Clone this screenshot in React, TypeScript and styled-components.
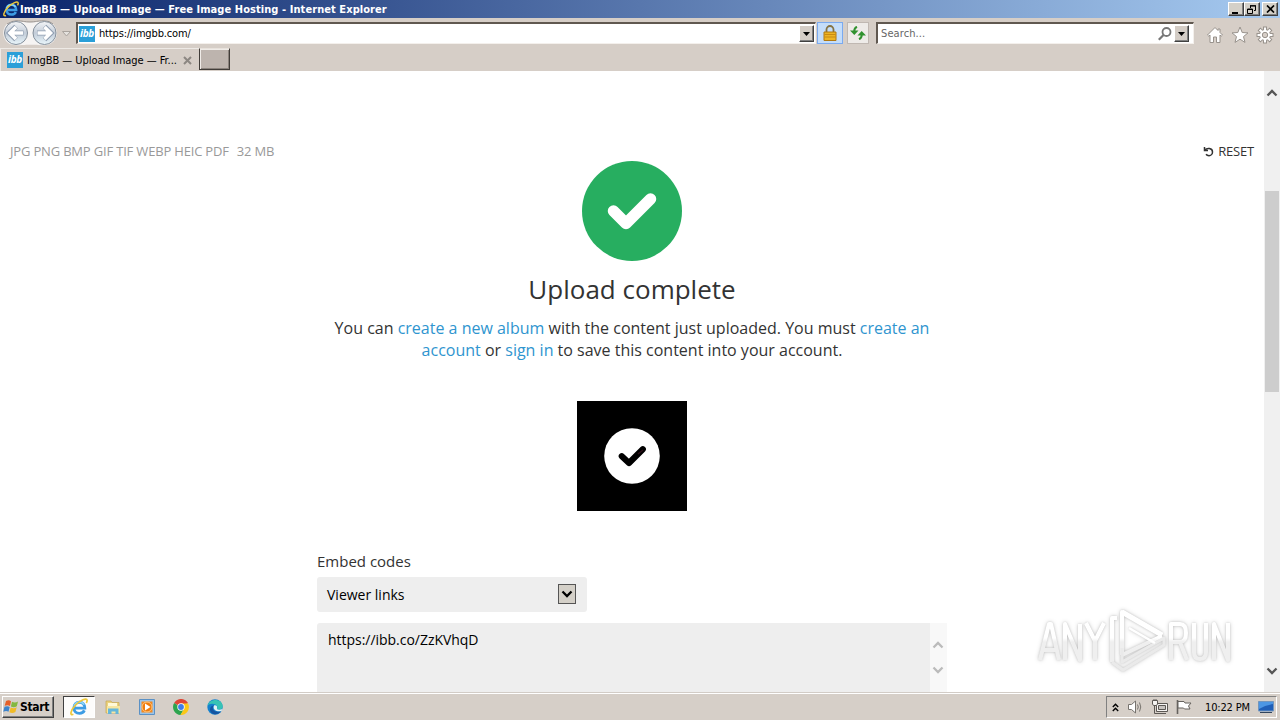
import React from 'react';
import styled, { createGlobalStyle } from 'styled-components';

const Global = createGlobalStyle`
  * { box-sizing: border-box; }
  body { margin: 0; width: 1280px; height: 720px; overflow: hidden; background: #fff; }
  svg { display: block; flex: none; }
`;
const ui = `font-family: "DejaVu Sans Condensed", "DejaVu Sans", sans-serif; font-stretch: condensed; font-size: 11px; white-space: nowrap;`;
const raised = `border: 1px solid; border-color: #fff #404040 #404040 #fff; box-shadow: inset -1px -1px #808080;`;

const Desktop = styled.div`width: 1280px; height: 720px; display: flex; flex-direction: column; overflow: hidden;`;
const TitleBar = styled.header`
  height: 18px; flex: none; display: flex; align-items: center; padding: 0 2px 0 3px;
  background: linear-gradient(90deg, #0a246a, #a6caf0);
`;
const Title = styled.div`
  ${ui} flex: 1; color: #fff; font-weight: 700; line-height: 18px; margin-left: 1px; padding-top: 1px; letter-spacing: 0.07px;
`;
const WinButton = styled.div<{ $gap?: boolean }>`
  width: 16px; height: 14px; background: #d4d0c8; ${raised} margin-left: ${p => (p.$gap ? 2 : 0)}px;
  display: flex; align-items: center; justify-content: center;
`;
const Toolbar = styled.div`height: 30px; flex: none; display: flex; align-items: flex-start; background: #d6cec7; padding: 2px 0 0 2px;`;
const AddressBar = styled.div`
  width: 740px; height: 22px; margin: 2px 0 0 4px; background: #fff; display: flex; align-items: center;
  border: 1px solid; border-color: #605850 #f4f0ec #f4f0ec #605850; border-top-width: 2px; border-left-width: 2px; padding-left: 1px;
`;
const SearchBar = styled(AddressBar)`width: 318px; margin-left: 7px; padding-left: 3px; padding-right: 4px;`;
const FieldText = styled.div<{ $muted?: boolean; $ls?: number }>`
  ${ui} flex: 1; color: ${p => (p.$muted ? '#666' : '#000')}; line-height: 18px; padding-top: 1px; margin-left: ${p => (p.$muted ? 0 : 4)}px;
  letter-spacing: ${p => p.$ls ?? 0}px;
`;
const Favicon = styled.div`
  width: 16px; height: 16px; flex: none; background: #2a9fd8; color: #fff; text-align: center;
  font: italic 700 10px/15px "Open Sans", sans-serif; letter-spacing: -0.3px;
`;
const DropButton = styled.div`
  width: 15px; height: 17px; background: #d4cdc6; ${raised} display: flex; align-items: center; justify-content: center;
  margin-left: 2px;
`;
const ToolButton = styled.div<{ $active?: boolean }>`
  width: ${p => (p.$active ? 26 : 22)}px; height: 22px; margin: 2px 0 0 ${p => (p.$active ? 1 : 4)}px;
  display: flex; align-items: center; justify-content: center;
  background: ${p => (p.$active ? '#c4ddfa' : '#eeebe8')}; border: 1px solid ${p => (p.$active ? '#7aaaf0' : '#c0b8b2')};
`;
const AddressEnd = styled.div`display: flex; width: 18px; padding-right: 1px;`;
const Commands = styled.div`display: flex; gap: 7px; padding: 6px 0 0 12px;`;
const TabStrip = styled.div`height: 23px; flex: none; display: flex; background: #d6cec7;`;
const Tab = styled.div`
  width: 199px; height: 23px; display: flex; align-items: center; padding-left: 6px; border-left: 1px solid #eeeae6; border-top: 1px solid #eeeae6;
`;
const TabText = styled(FieldText)`flex: none; width: 156px; margin-left: 4px;`;
const NewTab = styled.div`
  width: 31px; height: 22px; background: #bdb4ae; border: 1px solid #403c38; border-top-color: #e8e2dc; border-left-color: #403c38;
  box-shadow: inset 1px 1px #f0ece8, inset -1px -1px #8a827c;
`;
const Page = styled.main`flex: 1; min-height: 0; display: flex; background: #fff; overflow: hidden; font-family: "Open Sans", sans-serif;`;
const Content = styled.div`width: 1264px; display: flex; flex-direction: column; align-items: center; padding-top: 71px;`;
const InfoRow = styled.div`
  align-self: stretch; height: 19px; flex: none; display: flex; justify-content: space-between; padding: 0 10px 0 10px;
  font-size: 13px; line-height: 19px; color: #999; letter-spacing: -0.18px;
`;
const Formats = styled.div`display: flex; gap: 8px;`;
const Reset = styled.div`display: flex; align-items: center; gap: 4px; color: #333;`;
const BigMark = styled.div`width: 100px; height: 100px; flex: none;`;
const Heading = styled.h1`margin: 10px 0 0; font-size: 26px; line-height: 36px; font-weight: 400; color: #333; flex: none;`;
const Message = styled.p`
  margin: 10px 0 0; flex: none; font-size: 16px; line-height: 22px; color: #333; text-align: center; white-space: nowrap;
`;
const Link = styled.a`color: #2f95cf;`;
const Thumb = styled.div`width: 110px; height: 110px; margin-top: 40px; flex: none; background: #000;`;
const Embed = styled.section`width: 630px; margin-top: 39px; flex: none;`;
const Label = styled.div`font-size: 15px; line-height: 22px; color: #333;`;
const Select = styled.div`
  width: 270px; height: 35px; margin-top: 5px; border-radius: 3px; background: #eee; display: flex; align-items: center; justify-content: space-between;
  padding: 0 11px 0 10px; font-size: 14px; color: #000;
`;
const SelectArrow = styled.div`width: 18px; height: 20px; margin-bottom: 1px; background: #d4d0c8; border: 1px solid #555; display: flex; align-items: center; justify-content: center;`;
const CodeBox = styled.div`
  height: 90px; margin-top: 11px; background: #eee; border-radius: 3px; display: flex; justify-content: space-between;
  padding-left: 11px; font-size: 14px; line-height: 20px; color: #000;
`;
const CodeText = styled.div`padding-top: 7px; letter-spacing: -0.03px;`;
const InnerScroll = styled.div`width: 17px; background: #f8f8f8; display: flex; flex-direction: column; align-items: flex-start; padding: 18px 0 0 2px; gap: 17px;`;
const Scroll = styled.aside`width: 16px; background: #f0f0f0; display: flex; flex-direction: column; align-items: center; padding: 18px 0 17px;`;
const ScrollThumb = styled.div`width: 14px; height: 201px; margin: 94px 0 auto; background: #cdcdcd; flex: none;`;
const Taskbar = styled.footer`
  height: 28px; flex: none; background: #d6cfc8; border-top: 1px solid #d2ccc6; box-shadow: inset 0 1px #fff;
  display: flex; align-items: center; padding: 1px 3px 0 2px;
`;
const Start = styled.div`
  ${ui} width: 52px; height: 22px; ${raised} display: flex; align-items: center; font-weight: 700; font-size: 12px; padding-left: 0; letter-spacing: -0.3px;
`;
const ActiveTask = styled.div`
  width: 32px; height: 22px; margin-left: 9px; border: 1px solid; border-color: #404040 #fff #fff #404040; background: #fdfcfb;
  display: flex; align-items: center; justify-content: center;
`;
const Pinned = styled.div`display: flex; gap: 18px; margin-left: 10px; flex: 1;`;
const Tray = styled.div`
  width: 171px; height: 22px; border: 1px solid; border-color: #808080 #fff #fff #808080; display: flex; align-items: center; padding-left: 5px;
`;
const TrayIcons = styled.div`display: flex; gap: 8px; margin-left: 9px;`;
const Clock = styled.div`${ui} width: 46px; margin: 0 7px 0 13px; letter-spacing: -0.15px;`;
const Watermark = styled.div`
  position: absolute; left: 1030px; top: 600px;
  filter: drop-shadow(0 0 1px rgba(0, 0, 0, 0.13)) drop-shadow(0 0 2px rgba(0, 0, 0, 0.18));
`;

const Explorer = ({ s = 16 }: { s?: number }) => (
  <svg width={s} height={s} viewBox="0 0 16 16" fill="none">
    <path d="M3.3 9H13.2C13.2 5.6 11.2 3.8 8.4 3.8 5.5 3.8 3.5 5.8 3.5 8.8c0 3 2.1 4.8 4.9 4.8 2.1 0 3.7-1 4.4-2.6" stroke="#3d9ce4" strokeWidth="2.5" />
    <path d="M3.6 7.4C4.3 5 6.1 3.7 8.4 3.7c2 0 3.4.8 4.2 2.2" stroke="#8ad4f8" strokeWidth="1.6" />
    <path d="M3 14.5C-.5 16 .3 11 5 6.2 9.200 2 14.800-.5 15.200 2c.1.8-.2 1.600-.7 2.400" stroke="#edc739" strokeWidth="1.500" />
  </svg>
);
const Down = () => <svg width="7" height="4"><path d="M0 0h7L3.500 4z" fill="#000" /></svg>;
const Chevron = ({ up, c = '#555' }: { up?: boolean; c?: string }) => (
  <svg width="12" height="8" viewBox="0 0 12 8"><path d={up ? 'M1.500 6.500 6 2l4.500 4.500' : 'M1.500 1.500 6 6l4.500-4.500'} fill="none" stroke={c} strokeWidth="2.300" /></svg>
);

const NavButtons = () => (
  <svg width="70" height="28" viewBox="-1 0 70 28">
    <defs><linearGradient id="nav" x2="0" y2="1"><stop stopColor="#f4f5f7" /><stop offset=".5" stopColor="#c2ccd8" /><stop offset="1" stopColor="#e9f6fb" /></linearGradient></defs>
    <path d="M13 .8C20 .8 21 2 27 2S34 .8 41 .8c17 0 17 24.500 0 24.500-6 0-8-.5-14-.5s-8 .5-14 .5C-4 25.300-4 .8 13 .8z" fill="#f6f4f3" />
    <path d="M4 4Q9 .8 13 .8C20 .8 21 2 27 2S34 .8 41 .8Q47 .8 50 4" fill="none" stroke="#98928e" />
    <g fill="url(#nav)" stroke="#85909c"><circle cx="13" cy="13" r="11.500" /><circle cx="41.500" cy="13" r="11.500" /></g>
    <g fill="none" stroke="#8f9db0" strokeWidth="5"><path d="M20.500 13H7M13 6.500 6.500 13l6.500 6.500M34 13h13.500M41.500 6.500 48 13l-6.500 6.500" /></g>
    <g fill="none" stroke="#fff" strokeWidth="3.600"><path d="M20 13H7M13 7 7 13l6 6M34.500 13h13M41.500 7l6 6-6 6" /></g>
    <path d="M59.500 11.500h8l-4 4.500z" fill="#e5e2de" stroke="#aaa49e" />
  </svg>
);

const teeth = Array.from({ length: 8 }, (_, i) => i * 45);

export default function App() {
  return (
    <Desktop>
      <Global />
      <TitleBar>
        <Explorer />
        <Title>ImgBB — Upload Image — Free Image Hosting - Internet Explorer</Title>
        <WinButton><svg width="10" height="9"><path d="M1 7h6v2H1z" /></svg></WinButton>
        <WinButton><svg width="10" height="9" fill="none" stroke="#000"><path d="M3 1h5.500v4.500H7M3.500 3V1M3 .7h6M.5 4h5v4.500h-5zM.5 4.500h5" /></svg></WinButton>
        <WinButton $gap><svg width="9" height="8" stroke="#000" strokeWidth="1.700"><path d="M1 .5l7 7M8 .5l-7 7" /></svg></WinButton>
      </TitleBar>
      <Toolbar>
        <NavButtons />
        <AddressBar>
          <Favicon>ibb</Favicon>
          <FieldText $ls={-0.15}>https://imgbb.com/</FieldText>
          <AddressEnd><DropButton><Down /></DropButton></AddressEnd>
        </AddressBar>
        <ToolButton $active>
          <svg width="14" height="16" viewBox="0 0 14 16"><path d="M3.500 8V4.500a3.500 3.500 0 017 0V8" fill="none" stroke="#857344" strokeWidth="1.800" /><path d="M1 7h12v8.500H1z" fill="#edb424" stroke="#b07810" /><path d="M1.500 9.500h11M1.500 12h11" stroke="#c88a12" /></svg>
        </ToolButton>
        <ToolButton>
          <svg width="16" height="14" viewBox="0 0 16 14" fill="none" stroke="#30922f" strokeWidth="2"><path d="M7 .8Q4.300 2 4.300 5M9 13.200Q11.700 12 11.700 9" /><path d="M0 4.500h8.500L4.300 9zM7.500 9.500H16L11.700 5z" fill="#30922f" stroke="none" /></svg>
        </ToolButton>
        <SearchBar>
          <FieldText $muted $ls={0.1}>Search...</FieldText>
          <svg width="14" height="14" viewBox="0 0 14 14" fill="none" stroke="#777" strokeWidth="1.800"><circle cx="8.500" cy="5" r="4" /><path d="M5.500 8 .8 12.800" strokeWidth="2.200" /></svg>
          <DropButton><Down /></DropButton>
        </SearchBar>
        <Commands>
          <svg width="18" height="18" viewBox="0 0 18 18" fill="#fff" stroke="#98928c"><path d="M9 1.500 1.500 9l1.300 1.200L4 9v7.500h3.500V11h3v5.500H14V9l1.200 1.200L16.500 9 14 6.500V3h-2v1.500z" /></svg>
          <svg width="18" height="18" viewBox="0 0 18 18" fill="#fff" stroke="#98928c"><path d="M9 1l2.200 5.500 5.800.4-4.500 3.700 1.500 5.800-5-3.200-5 3.200 1.500-5.800L1 6.900l5.800-.4z" /></svg>
          <svg width="18" height="18" viewBox="0 0 18 18"><g fill="#fff" stroke="#98928c">{teeth.map(a => <rect key={a} x="7.500" y="1" width="3" height="4" transform={`rotate(${a} 9 9)`} />)}<circle cx="9" cy="9" r="5.500" /></g><g fill="#fff">{teeth.map(a => <rect key={a} x="8" y="2" width="2" height="4" transform={`rotate(${a} 9 9)`} />)}</g><circle cx="9" cy="9" r="2.700" fill="#d6cec7" stroke="#98928c" /></svg>
        </Commands>
      </Toolbar>
      <TabStrip>
        <Tab>
          <Favicon>ibb</Favicon>
          <TabText $ls={-0.04}>ImgBB — Upload Image — Fr...</TabText>
          <svg width="9" height="9" stroke="#8c8782" strokeWidth="2"><path d="M1 1l7 7M8 1 1 8" /></svg>
        </Tab>
        <NewTab />
      </TabStrip>
      <Page>
        <Content>
          <InfoRow>
            <Formats><span>JPG PNG BMP GIF TIF WEBP HEIC PDF</span><span>32 MB</span></Formats>
            <Reset>
              <svg width="11" height="11" viewBox="0 0 11 11" fill="none" stroke="#333" strokeWidth="1.500"><path d="M1.500 1v3.500H5M1.800 4.200C4 1.500 9.500 2 9.500 6c0 2-1.500 3.700-3.500 3.700-1.300 0-2.300-.5-3-1.400" /></svg>
              <span>RESET</span>
            </Reset>
          </InfoRow>
          <BigMark>
            <svg width="100" height="100"><circle cx="50" cy="50" r="50" fill="#27ae60" /><path d="M31.500 50 44 62.500 68.500 38" fill="none" stroke="#fff" strokeWidth="11.500" strokeLinecap="round" strokeLinejoin="round" /></svg>
          </BigMark>
          <Heading>Upload complete</Heading>
          <Message>
            You can <Link>create a new album</Link> with the content just uploaded. You must <Link>create an<br />account</Link> or <Link>sign in</Link> to save this content into your account.
          </Message>
          <Thumb>
            <svg width="110" height="110"><circle cx="55" cy="55" r="27.800" fill="#fff" /><path d="M44.800 55.200 52 62l13.800-13.800" fill="none" stroke="#000" strokeWidth="6.200" strokeLinecap="round" strokeLinejoin="round" /><path d="M61 53l5-4" stroke="#30101a" strokeWidth="1.500" /></svg>
          </Thumb>
          <Embed>
            <Label>Embed codes</Label>
            <Select><span>Viewer links</span><SelectArrow><Chevron c="#000" /></SelectArrow></Select>
            <CodeBox><CodeText>https://ibb.co/ZzKVhqD</CodeText><InnerScroll><Chevron up c="#bbb" /><Chevron c="#bbb" /></InnerScroll></CodeBox>
          </Embed>
        </Content>
        <Scroll><Chevron up /><ScrollThumb /><Chevron /></Scroll>
      </Page>
      <Taskbar>
        <Start>
          <svg width="17" height="16" viewBox="0 0 17 16"><path d="M3 2q3-1.500 5 .3L7 7Q5 5.500 1.700 6.800z" fill="#e5602a" /><path d="M9 2.800q3 1.500 6-.3L13.800 7.200Q11 9 7.900 7.500z" fill="#83b840" /><path d="M1.500 7.800q3-1.300 5.200.2l-1.200 4.800Q3.500 11.500.3 12.700z" fill="#3c83cc" /><path d="M7.700 8.500q3 1.500 6-.2l-1.300 4.800q-3 1.700-6 .2z" fill="#f0bb27" /></svg>
          Start
        </Start>
        <ActiveTask><Explorer s={18} /></ActiveTask>
        <Pinned>
          <svg width="16" height="16" viewBox="0 0 16 16"><path d="M1 2h5l1 1.500h7V14H1z" fill="#ead27d" stroke="#c5a655" strokeWidth=".7" /><path d="M3 4h9v3H3z" fill="#fff9d8" /><path d="M2 7h13v7H2z" fill="#f6e6a2" /><path d="M3 15V9.500h10.500V15h-3v-2.500h-4V15z" fill="#65b6da" /></svg>
          <svg width="16" height="16" viewBox="0 0 16 16"><path d="M.5.5h15v15H.5z" fill="#9bc4e9" stroke="#5b91c5" /><path d="M2.500 2.500h11v11h-11z" fill="#f58a1f" /><circle cx="8" cy="8" r="5" fill="#ef7c0d" stroke="#ffc780" /><path d="M6 4.500 11.500 8 6 11.500z" fill="#fff" /></svg>
          <svg width="16" height="16" viewBox="0 0 16 16"><path d="M8 8 1.100 4A8 8 0 0115 4z" fill="#df4636" /><path d="M8 8h-.5L1.100 4A8 8 0 007.500 16L11 10z" fill="#2da44e" /><path d="M8 4.500h7.100A8 8 0 017.500 16L11 10z" fill="#fbc817" /><circle cx="8" cy="8" r="3.700" fill="#fff" /><circle cx="8" cy="8" r="2.900" fill="#3f7de8" /></svg>
          <svg width="16" height="16" viewBox="0 0 16 16"><circle cx="8" cy="8" r="7.700" fill="#1380ce" /><path d="M.5 7C2-1 15-1 15.700 7c.3 3-3 4.500-6 3 .8-1 .9-2 .3-3C8 4 2 4 .5 7z" fill="#37c3b5" /><path d="M7 6.500c-3 3-.5 7.500 7 6-4 5-11 2.500-11-2C3 8 5 6.500 7 6.500z" fill="#1554a0" /><path d="M7 6.500c2-.8 3.700.8 3 2.500-.6 1.500 1.500 2.500 5.600 1l-.8 1.800C11 13.500 5 11 7 6.500z" fill="#e2f2f5" /></svg>
        </Pinned>
        <Tray>
          <svg width="7" height="9" fill="none" stroke="#000" strokeWidth="1.400"><path d="M.8 4 3.500 1.300 6.200 4M.8 8l2.700-2.700L6.200 8" /></svg>
          <TrayIcons>
            <svg width="16" height="16" viewBox="1 0 16 16" fill="#fff" stroke="#77736e"><path d="M1.500 5.500h3L8.500 2v12l-4-3.500h-3z" /><path d="M10.500 5.500q1.500 2.500 0 5M12.500 3.500q2.500 4.500 0 9" fill="none" /></svg>
            <svg width="16" height="16" viewBox="0 0 16 16" fill="#f6f4f2" stroke="#5c5854"><path d="M4.500 4.500h11v8h-11z" /><path d="M6.500 6.500h7v4h-7z" fill="#c8c4c0" /><path d="M7 14.500h7M2.500 6v8.500H7" fill="none" /><path d="M.5 1.500h5V5l-1 1.500h-3L.5 5zM2 0v2M4 0v2" /></svg>
            <svg width="16" height="16" viewBox="0 0 16 16" fill="#fff" stroke="#66625e"><path d="M1.500 1v14" strokeWidth="1.600" /><path d="M2 2.500h6l1 1.500h6l-2.500 3 1.500 3H8.500l-1-1H2z" /></svg>
          </TrayIcons>
          <Clock>10:22 PM</Clock>
          <svg width="16" height="14" viewBox="0 0 16 14"><path d="M.5 1.500h15V11H.5z" fill="#205fb8" stroke="#7396bd" /><path d="M1 2h14v2Q7 5 1 9z" fill="#4c96e4" /><path d="M2 12.500h12" stroke="#31445c" /></svg>
        </Tray>
      </Taskbar>
      <Watermark>
        <svg width="210" height="84" viewBox="0 0 210 84">
          <defs>
            <linearGradient id="fade" gradientUnits="userSpaceOnUse" x1="0" y1="38" x2="0" y2="42"><stop stopColor="#fff" /><stop offset="1" stopColor="#efefef" /></linearGradient>
          </defs>
          <g fill="none" stroke="url(#fade)" strokeWidth="4" strokeLinejoin="round">
            <path d="M10 60 19 24h2l8 36M13 50h13M35 60V24l15 36V24M56 23l9 18V60M74 23l-9 18" />
            <path d="M141 60V24h9q6 0 6 9t-6 9h-9M150 42l7 18M164 23v29q0 7 6 7t6-7V23M184 60V24l14 36V23" />
            <path d="M82 62V18h5M92 55V12l40 23M92 55l40-19" />
          </g>
          <path d="M82 62 93 70 134 45V38L92 62V48" fill="none" stroke="#eaeaea" strokeWidth="3" strokeLinejoin="round" />
          <path d="M92 12 132 35" stroke="#fff" strokeWidth="5" /><path d="M99 28l26 15" stroke="#fff" strokeWidth="2.500" />
        </svg>
      </Watermark>
    </Desktop>
  );
}
